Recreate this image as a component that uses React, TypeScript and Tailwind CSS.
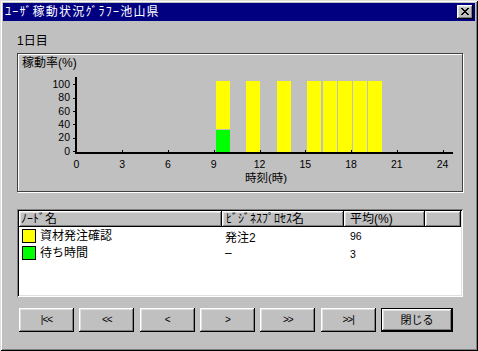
import React from "react";

const raised =
  "shadow-[inset_-1px_-1px_0_#000,inset_1px_1px_0_#fff,inset_-2px_-2px_0_#808080,inset_2px_2px_0_#dfdfdf]";

function Btn({ children, def }: { children: React.ReactNode; def?: boolean }) {
  if (def) {
    return (
      <div className="w-[72px] h-[24px] border border-black">
        <button
          className={`w-full h-full bg-[#c0c0c0] ${raised} flex items-center justify-center text-[11px] leading-[12px] text-black`}
        >
          {children}
        </button>
      </div>
    );
  }
  return (
    <button
      className={`w-[55px] h-[24px] bg-[#c0c0c0] ${raised} flex items-center justify-center text-[10px] leading-[12px] tracking-[-1px] text-black`}
    >
      {children}
    </button>
  );
}

function CloseX() {
  const px: [number, number][] = [];
  const rows = [
    "XX....XX",
    ".XX..XX.",
    "..XXXX..",
    "...XX...",
    "..XXXX..",
    ".XX..XX.",
    "XX....XX",
  ];
  rows.forEach((r, y) => r.split("").forEach((c, x) => c === "X" && px.push([x, y])));
  return (
    <svg width="8" height="7" shapeRendering="crispEdges">
      {px.map(([x, y]) => (
        <rect key={`${x}-${y}`} x={x} y={y} width="1" height="1" fill="#000" />
      ))}
    </svg>
  );
}

function Chart() {
  const ox = 18;
  const oy = 70;
  const X = (h: number) => 76.5 + 15.25 * h - ox;
  const hours = [9, 11, 13, 15, 16, 17, 18, 19];
  const yLabels = [100, 80, 60, 40, 20, 0];
  const xLabels = [0, 3, 6, 9, 12, 15, 18, 21, 24];
  return (
    <svg width="444" height="121" className="block" shapeRendering="crispEdges">
      {hours.map((h) => {
        const x = Math.round(78.5 + 15.25 * h) - ox;
        if (h === 9) {
          return (
            <g key={h}>
              <rect x={x} y={81 - oy} width="14" height={129 - 81} fill="#ffff00" />
              <rect x={x} y={130 - oy} width="14" height={152 - 130} fill="#00ff00" />
            </g>
          );
        }
        return <rect key={h} x={x} y={81 - oy} width="14" height={152 - 81} fill="#ffff00" />;
      })}
      <rect x={75 - ox} y={77 - oy} width="2" height={154 - 77} fill="#000" />
      <rect x={75 - ox} y={152 - oy} width={453 - 75} height="2" fill="#000" />
      {yLabels.map((v, i) => {
        const cy = 84.3 + i * 13.33 - oy;
        return (
          <g key={v}>
            <rect x={73 - ox} y={Math.round(cy)} width="2" height="1" fill="#000" />
            <text x={70 - ox} y={cy + 3.8} fontSize="10.5" textAnchor="end" fill="#000">
              {v}
            </text>
          </g>
        );
      })}
      {xLabels.map((v) => {
        const x = X(v);
        return (
          <g key={v}>
            {v > 0 && <rect x={Math.round(x)} y={150 - oy} width="1" height="2" fill="#000" />}
            <text x={x} y={164 - oy + 3.8} fontSize="10.5" textAnchor="middle" fill="#000">
              {v}
            </text>
          </g>
        );
      })}
      <text x={245 - ox} y={182 - oy} fontSize="11.5" fill="#000">
        時刻(時)
      </text>
    </svg>
  );
}

export default function App() {
  return (
    <div
      className={`w-[478px] h-[351px] bg-[#c0c0c0] p-[3px] shadow-[inset_1px_1px_0_#dfdfdf,inset_-1px_-1px_0_#000,inset_2px_2px_0_#fff,inset_-2px_-2px_0_#808080] flex flex-col font-['Liberation_Sans','Noto_Sans_CJK_JP',sans-serif] text-[12px] leading-[12px] text-black`}
    >
      <div className="h-[18px] bg-[#000080] flex items-center justify-between pl-[2px] pr-[2px]">
        <span className="text-white text-[12px] leading-[12px] tracking-[1.2px]">ﾕｰｻﾞ稼動状況ｸﾞﾗﾌｰ池山県</span>
        <button className={`w-[16px] h-[14px] bg-[#c0c0c0] ${raised} flex items-start justify-start pl-[4px] pt-[3px]`}>
          <CloseX />
        </button>
      </div>

      <div className="flex flex-col pl-[14px] pt-[14px]">
        <div className="h-[12px] leading-[12px]">1日目</div>

        <div className="mt-[6px] w-[446px] h-[139px] border border-[#404040] shadow-[1px_1px_0_#fff,inset_1px_1px_0_#fff] flex flex-col">
          <div className="h-[16px] pl-[4px] pt-[3px] leading-[12px]">稼動率(%)</div>
          <Chart />
        </div>

        <div className="mt-[17px] w-[446px] h-[88px] bg-white p-[2px] shadow-[inset_1px_1px_0_#808080,inset_-1px_-1px_0_#fff,inset_2px_2px_0_#000,inset_-2px_-2px_0_#dfdfdf] flex flex-col">
          <div className="flex h-[16px]">
            <div className={`w-[203px] bg-[#c0c0c0] ${raised} flex items-center pl-[2px]`}>ﾉｰﾄﾞ名</div>
            <div className={`w-[122px] bg-[#c0c0c0] ${raised} flex items-center pl-[4px]`}>ﾋﾞｼﾞﾈｽﾌﾟﾛｾｽ名</div>
            <div className={`w-[81px] bg-[#c0c0c0] ${raised} flex items-center pl-[6px]`}>平均(%)</div>
            <div className={`flex-1 bg-[#c0c0c0] ${raised}`} />
          </div>
          <div className="flex h-[17px]">
            <div className="w-[203px] flex items-center pl-[3px]">
              <span className="w-[14px] h-[14px] border border-black bg-[#ffff00]" />
              <span className="ml-[4px]">資材発注確認</span>
            </div>
            <div className="w-[122px] pl-[3px] pt-[5px]">発注2</div>
            <div className="w-[81px] pl-[6px] pt-[3px] text-[10.5px]">96</div>
          </div>
          <div className="flex h-[17px]">
            <div className="w-[203px] flex items-center pl-[3px]">
              <span className="w-[14px] h-[14px] border border-black bg-[#00ff00]" />
              <span className="ml-[4px]">待ち時間</span>
            </div>
            <div className="w-[122px] pl-[3px] pt-[3px]">–</div>
            <div className="w-[81px] pl-[6px] pt-[4px] text-[10.5px]">3</div>
          </div>
        </div>

        <div className="mt-[11px] ml-[2px] w-[434px] flex justify-between">
          <Btn>|&lt;&lt;</Btn>
          <Btn>&lt;&lt;</Btn>
          <Btn>&lt;</Btn>
          <Btn>&gt;</Btn>
          <Btn>&gt;&gt;</Btn>
          <Btn>&gt;&gt;|</Btn>
          <Btn def>閉じる</Btn>
        </div>
      </div>
    </div>
  );
}
